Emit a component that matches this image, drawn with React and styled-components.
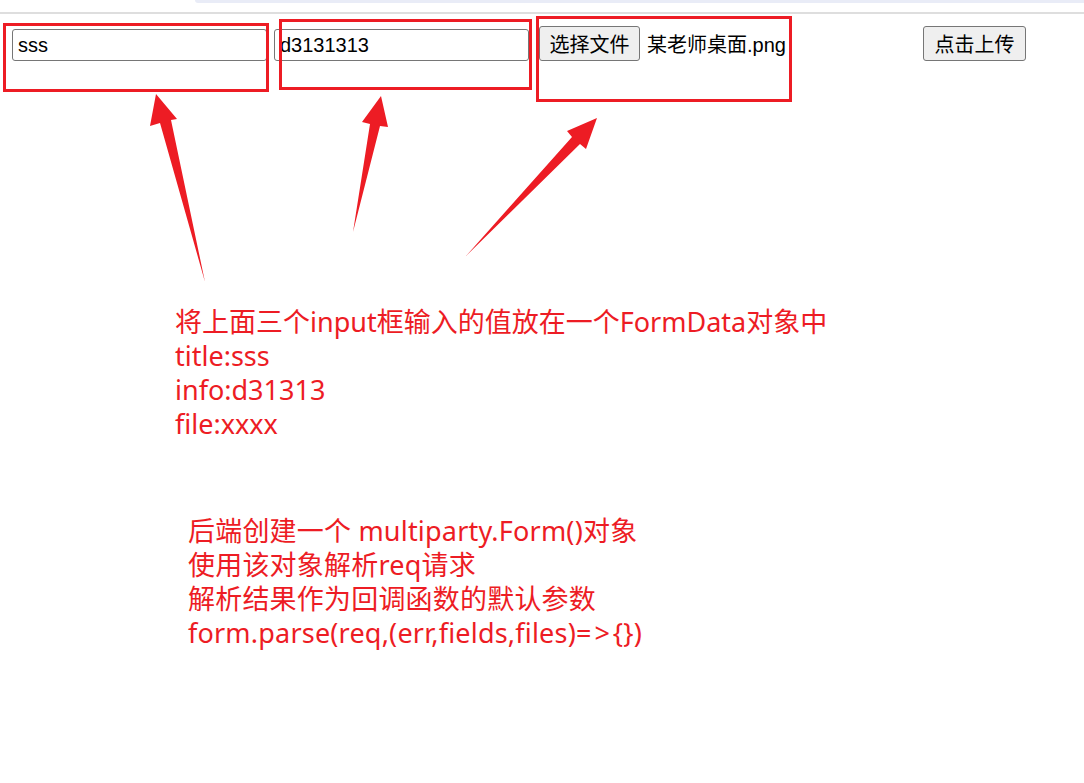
import React from 'react'
import styled, {createGlobalStyle} from 'styled-components'

const GlobalStyle = createGlobalStyle`
  html, body {
    margin: 0;
    padding: 0;
    background: #fff;
  }
`

const MARK = '#ed1c24'

const Screen = styled.div`
  position: relative;
  width: 1084px;
  height: 783px;
  overflow: hidden;
  background: #fff;
  font-family: "Liberation Sans", "Noto Sans CJK SC", sans-serif;
`

const ChromeEdge = styled.div`
  height: 12px;
  border-bottom: 2px solid #dedede;
  display: flex;
  justify-content: flex-end;
`

const ChromeTab = styled.div`
  width: 889px;
  height: 3px;
  background: #e9ecf7;
  border-bottom-left-radius: 12px;
`

const Page = styled.div`
  padding: 12px;
`

const Row = styled.div`
  display: flex;
  align-items: flex-end;
  gap: 7px;
`

const TextInput = styled.input`
  box-sizing: border-box;
  width: 255px;
  height: 32px;
  margin: 0;
  padding: 0 5px;
  border: 1px solid #767676;
  border-radius: 3px;
  font-family: "Liberation Sans", "Noto Sans CJK SC", sans-serif;
  font-size: 20px;
  color: #000;
  outline: none;
`

const FilePicker = styled.label`
  display: flex;
  align-items: center;
  gap: 7px;
  width: 377px;
  margin-left: 3px;
  font-size: 20px;
  color: #000;
`

const Button = styled.button`
  box-sizing: border-box;
  display: flex;
  align-items: center;
  justify-content: center;
  width: ${p => p.$w}px;
  height: 35px;
  margin: 0;
  padding: 0;
  background: #efefef;
  border: 1px solid #767676;
  border-radius: 3px;
  font-family: "Liberation Sans", "Noto Sans CJK SC", sans-serif;
  font-size: 20px;
  color: #000;
`

const Overlay = styled.div`
  position: absolute;
  inset: 0;
  pointer-events: none;
`

const Frame = styled.div`
  position: absolute;
  box-sizing: border-box;
  left: ${p => p.$x}px;
  top: ${p => p.$y}px;
  width: ${p => p.$w}px;
  height: ${p => p.$h}px;
  border: 3px solid ${MARK};
`

const Arrows = styled.svg`
  position: absolute;
  left: 0;
  top: 0;
`

const Note = styled.div`
  position: absolute;
  left: ${p => p.$x}px;
  top: ${p => p.$y}px;
  font-family: "Noto Sans", "Noto Sans CJK SC", sans-serif;
  font-size: 27px;
  letter-spacing: ${p => p.$ls || 0}px;
  line-height: 34px;
  color: ${MARK};
  white-space: pre;
`

const Op = styled.span`
  letter-spacing: 3px;
`

function App() {
  return (
    <Screen>
      <GlobalStyle />
      <ChromeEdge>
        <ChromeTab />
      </ChromeEdge>
      <Page>
        <Row>
          <TextInput defaultValue="sss" />
          <TextInput defaultValue="d3131313" />
          <FilePicker>
            <Button as="span" $w={101}>选择文件</Button>
            <span>某老师桌面.png</span>
          </FilePicker>
          <Button $w={103}>点击上传</Button>
        </Row>
      </Page>

      <Overlay>
        <Frame $x={3} $y={23} $w={266} $h={69} />
        <Frame $x={279} $y={19} $w={253} $h={71} />
        <Frame $x={536} $y={16} $w={256} $h={86} />

        <Arrows width="1084" height="783" viewBox="0 0 1084 783">
          <polygon fill={MARK} points="205,282 171,120 177,119 156,94 150,126 160,123" />
          <polygon fill={MARK} points="353,232 370,124 362,122 381,96 388,127 380,126" />
          <polygon fill={MARK} points="466,256 572,137 567,131 597,118 586,149 580,144" />
        </Arrows>

        <Note $x={175} $y={305}>
          {'将上面三个input框输入的值放在一个FormData对象中\ntitle:sss\ninfo:d31313\nfile:xxxx'}
        </Note>
        <Note $x={188} $y={514} $ls={0.2}>
          {'后端创建一个 multiparty.Form()对象\n使用该对象解析req请求\n解析结果作为回调函数的默认参数\n'}
          form.parse(req,(err,fields,files)<Op>=&gt;</Op>{'{})'}
        </Note>
      </Overlay>
    </Screen>
  )
}

export default App
